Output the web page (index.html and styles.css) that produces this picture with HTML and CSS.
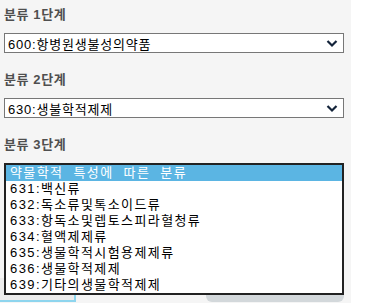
FILE: index.html
```html
<!DOCTYPE html>
<html lang="ko">
<head>
    <meta charset="UTF-8">
    <meta name="viewport" content="width=device-width, initial-scale=1.0">
    <title>분류 선택</title>
    <link rel="stylesheet" href="styles.css">
</head>
<body>
    <div class="panel">
        <div class="group">
            <div class="label">분류 1단계</div>
            <div class="select">
                <span>600:항병원생불성의약품</span>
                <svg class="chevron" width="12" height="9" viewBox="0 0 12 9"><polyline points="1.5,2 6,6.5 10.5,2" fill="none" stroke="#13233a" stroke-width="2.2"/></svg>
            </div>
        </div>
        <div class="group">
            <div class="label">분류 2단계</div>
            <div class="select">
                <span>630:생불학적제제</span>
                <svg class="chevron" width="12" height="9" viewBox="0 0 12 9"><polyline points="1.5,2 6,6.5 10.5,2" fill="none" stroke="#13233a" stroke-width="2.2"/></svg>
            </div>
        </div>
        <div class="group group-last">
            <div class="label">분류 3단계</div>
            <div class="select"></div>
            <!-- open dropdown list -->
            <ul class="listbox">
                <li class="selected">약물학적 특성에 따른 분류</li>
                <li>631:백신류</li>
                <li>632:독소류및톡소이드류</li>
                <li>633:항독소및렙토스피라혈청류</li>
                <li>634:혈액제제류</li>
                <li>635:생물학적시험용제제류</li>
                <li>636:생물학적제제</li>
                <li>639:기타의생물학적제제</li>
            </ul>
        </div>
        <div class="actions">
            <div class="search-box"></div>
            <div class="search-btn"></div>
        </div>
    </div>
</body>
</html>
```

FILE: styles.css
```css
/* General styles */
body {
    margin: 0;
    padding: 0;
    background: #fff;
    font-family: 'Liberation Sans', 'Noto Sans CJK KR', sans-serif;
    color: #000;
}

.panel {
    width: 351px;
    height: 303px;
    padding: 5px 0 0 4px;
    background: #f5f5f5;
    box-sizing: border-box;
    overflow: hidden;
}

.group {
    position: relative;
    margin-bottom: 17px;
}

.group-last {
    margin-bottom: 0;
}

.label {
    height: 20px;
    line-height: 20px;
    margin-bottom: 8px;
    font-size: 13px;
    font-weight: bold;
    letter-spacing: 0.6px;
    color: #4f4f4f;
}

.select {
    display: flex;
    align-items: center;
    justify-content: space-between;
    width: 340px;
    height: 20px;
    padding: 0 5px 0 3px;
    border: 1px solid #777;
    background: #fff;
    box-sizing: border-box;
    font-size: 13px;
    letter-spacing: 0.8px;
}

.chevron {
    display: block;
}

/* dropdown popup over the page */
.listbox {
    position: absolute;
    top: 28px;
    left: 0;
    width: 340px;
    margin: 0;
    padding: 0;
    list-style: none;
    border: 2px solid #222;
    background: #fff;
    box-sizing: border-box;
    z-index: 2;
}

.listbox li {
    height: 16px;
    line-height: 16px;
    padding-left: 4px;
    font-size: 13px;
    letter-spacing: 1.4px;
    word-spacing: 5px;
    white-space: nowrap;
}

.listbox li.selected {
    background: #5bb5e3;
    color: #fff;
}

.actions {
    display: flex;
    justify-content: space-between;
    margin-top: 95px;
}

.search-box {
    width: 76px;
    height: 24px;
    margin-left: -4px;
    background: #ececec;
    border-right: 2px solid #8ed5ee;
    border-bottom: 2px solid #8ed5ee;
    box-sizing: border-box;
}

.search-btn {
    width: 138px;
    height: 24px;
    margin-right: 7px;
    border-radius: 0 0 6px 6px;
    background: #d3d8db;
}
```
